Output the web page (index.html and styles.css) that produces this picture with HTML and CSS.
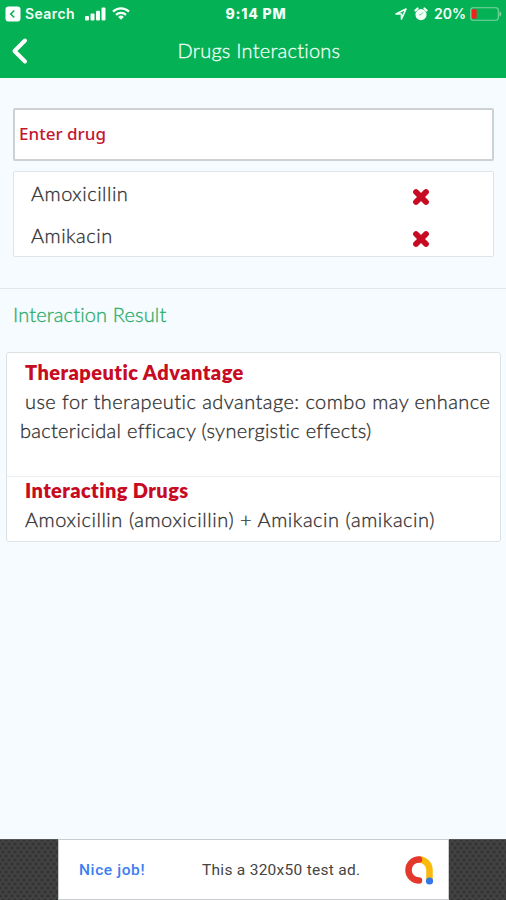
FILE: index.html
```html
<!DOCTYPE html>
<html lang="en">
<head>
<meta charset="utf-8">
<title>Drugs Interactions</title>
<link rel="stylesheet" href="styles.css">
</head>
<body>
<div class="screen">
  <header class="top">
    <div class="status">
      <div class="status-left">
        <svg class="back-app" viewBox="0 0 16 16"><rect x=".5" y=".5" width="15" height="15" rx="3" fill="#fff"/><path d="M9.300 4.500 5.700 8l3.600 3.500" fill="none" stroke="#05b155" stroke-width="1.600"/></svg>
        <span class="search">Search</span>
        <svg class="signal" viewBox="0 0 21 14" fill="#f4fff8"><rect x="0" y="9" width="4" height="4.500" rx="1"/><rect x="5.500" y="6.500" width="4" height="7" rx="1"/><rect x="11" y="3.800" width="4" height="9.700" rx="1"/><rect x="16.500" y="0.500" width="4" height="13" rx="1"/></svg>
        <svg class="wifi" viewBox="0 0 18 13" fill="none" stroke="#f4fff8" stroke-width="2.200"><path d="M1 4.600a11.500 11.500 0 0 1 16 0"/><path d="M4 7.900a7.200 7.200 0 0 1 10 0"/><path d="M6.200 9.900a4 4 0 0 1 5.600 0L9 12.800z" fill="#f4fff8" stroke="none"/></svg>
      </div>
      <div class="time"><span class="clock">9:14 PM</span></div>
      <div class="status-right">
        <svg class="arrow" viewBox="0 0 12 12"><path d="M1 6 11 1 6.500 11V6z" fill="none" stroke="#f4fff8" stroke-width="1.600" stroke-linejoin="round"/></svg>
        <svg class="alarm" viewBox="0 0 14 14"><circle cx="7" cy="7.600" r="5.600" fill="#f4fff8"/><path d="M1.400 3.600 3.600 1.400M12.600 3.600l-2.200-2.200" stroke="#f4fff8" stroke-width="2.100" stroke-linecap="round"/><path d="M9 5.400 7 7.700H5" fill="none" stroke="#5ccb8e" stroke-width=".9"/></svg>
        <span class="percent">20%</span>
        <svg class="battery" viewBox="0 0 32 14"><rect x=".7" y=".7" width="27.600" height="12.600" rx="2.500" fill="none" stroke="#7ed6a4" stroke-width="1.100"/><path d="M29.500 4.500c2.400.5 2.400 4.500 0 5z" fill="#7ed6a4"/><rect x="2" y="2.200" width="4.600" height="9.600" rx="1" fill="#f5201c"/></svg>
      </div>
    </div>
    <div class="nav">
      <svg class="back" viewBox="0 0 18 28"><path d="M15 3.500 4.500 14 15 24.500" fill="none" stroke="#fff" stroke-width="4" stroke-linecap="round" stroke-linejoin="round"/></svg>
      <h1><span class="title">Drugs Interactions</span></h1>
    </div>
  </header>
  <main>
    <section class="entry">
      <div class="field"><span class="enter">Enter drug</span></div>
      <ul class="drugs">
        <li><span class="amox">Amoxicillin</span><svg class="cross" viewBox="0 0 18 18"><path d="m4.500 4.500 9 9M13.500 4.500l-9 9" stroke="#c60b22" stroke-width="5.200" stroke-linecap="round"/></svg></li>
        <li><span class="amik">Amikacin</span><svg class="cross" viewBox="0 0 18 18"><path d="m4.500 4.500 9 9M13.500 4.500l-9 9" stroke="#c60b22" stroke-width="5.200" stroke-linecap="round"/></svg></li>
      </ul>
    </section>
    <h2><span class="result-title">Interaction Result</span></h2>
    <section class="card">
      <div class="advantage">
        <h3><span class="adv-title">Therapeutic Advantage</span></h3>
        <p class="copy"><span class="line-one">use for therapeutic advantage: combo may enhance</span><br><span class="line-two">bactericidal efficacy (synergistic effects)</span></p>
      </div>
      <div class="pair">
        <h3><span class="int-title">Interacting Drugs</span></h3>
        <p><span class="line-pair">Amoxicillin (amoxicillin) + Amikacin (amikacin)</span></p>
      </div>
    </section>
  </main>
  <footer>
    <div class="mesh"></div>
    <div class="ad">
      <span class="nice">Nice job!</span>
      <span class="test">This a 320x50 test ad.</span>
      <svg class="admob" viewBox="0 0 30 30" fill="none" stroke-width="6.500" stroke-linecap="round"><path d="M15.500 4.500A10.500 10.500 0 0 1 25.500 15v10" stroke="#fbb90c"/><path d="M15 4.500a10.500 10.500 0 1 0 0 21" stroke="#e5382c"/><circle cx="25.500" cy="26" r="3.600" fill="#3278e8"/></svg>
    </div>
    <div class="mesh"></div>
  </footer>
</div>
</body>
</html>
```
FILE: styles.css
```css
* { box-sizing: border-box; }
body { margin: 0; font-family: Lato, sans-serif; font-variant-ligatures: none; color: #303030; }
h1, h2, h3, p, ul { margin: 0; padding: 0; font-weight: 300; }
span { white-space: nowrap; }
svg { display: block; flex: none; }
.screen { width: 506px; height: 900px; display: flex; flex-direction: column; background: #f5fbfe; overflow: hidden; }
.top { height: 78px; background: #05b155; color: #f4fff8; }
.status { height: 27px; display: grid; grid-template-columns: 200px 112px 1fr; font: 700 14px/27px Inter, sans-serif; }
.status-left, .status-right { display: flex; align-items: center; }
.status-left { padding-left: 5px; font-weight: 600; }
.back-app { width: 16px; height: 16px; }
.search { margin-left: 4px; width: 50px; letter-spacing: .4px; }
.signal { width: 21px; height: 14px; margin-left: 10px; }
.wifi { width: 18px; height: 13px; margin-left: 6px; }
.time { text-align: center; }
.clock { font-weight: 800; letter-spacing: .8px; }
.status-right { justify-content: flex-end; padding-right: 4px; font-weight: 600; }
.arrow { width: 12px; height: 12px; margin-right: 7px; }
.alarm { width: 14px; height: 14px; margin-right: 6px; }
.percent { width: 32px; margin-right: 4px; }
.battery { width: 32px; height: 14px; }
.nav { height: 51px; display: grid; grid-template-columns: 40px 1fr 28px; align-items: start; }
.back { width: 18px; height: 28px; margin: 10px 0 0 10px; }
h1 { font-size: 20px; line-height: 47px; text-align: center; }
.title { letter-spacing: .25px; }
h1, h2, .drugs, .card p { -webkit-text-stroke: .3px currentColor; }
main { flex: 1; }
.entry { padding: 30px 12px 31px 13px; border-bottom: 1px solid #e2e8ea; height: 211px; }
.field { height: 53px; border: 2px solid #cdd1d2; border-radius: 2px; background: #fff; padding-left: 4px; line-height: 48px; font-size: 17px; color: #c51630; font-weight: 500; font-family: "Noto Sans", sans-serif; }
.drugs { list-style: none; margin-top: 10px; height: 86px; border: 1px solid #dfe5e7; border-radius: 2px; background: #fff; padding: 1px 62px 0 17px; font-size: 20px; font-weight: 300; }
.drugs li { height: 42px; display: flex; align-items: center; justify-content: space-between; line-height: 38px; padding-bottom: 3px; }
.amox, .amik { letter-spacing: .5px; }
.cross { width: 20px; height: 20px; margin-top: 8px; }
h2 { font-size: 20px; line-height: 24px; padding: 13px 0 0 13px; color: #2cac65; height: 63px; }
.result-title { letter-spacing: .15px; }
.card { margin: 0 5px 0 6px; border: 1px solid #dce2e4; border-radius: 3px; background: #fff; height: 190px; font-size: 20px; line-height: 29px; }
h3 { padding-left: 18px; font-size: 20px; font-weight: 800; color: #c60b22; }
.adv-title { letter-spacing: .45px; }
.int-title { letter-spacing: .4px; }
.advantage { height: 124px; padding-top: 5px; border-bottom: 1px solid #eceeef; }
.copy { padding-left: 13px; }
.line-one { margin-left: 5px; letter-spacing: .44px; }
.line-two { letter-spacing: .28px; }
.line-pair { letter-spacing: .55px; }
.pair { margin-top: -1px; }
.pair p { padding-left: 18px; }
footer { height: 61px; display: grid; grid-template-columns: 58px 391px 57px; }
.mesh { background-color: #434343; background-image: radial-gradient(circle, #343434 1.300px, transparent 2px), radial-gradient(circle, #343434 1.300px, transparent 2px); background-size: 6px 8px; background-position: 0 0, 3px 4px; border-top: 1px solid #555; }
.ad { background: #fff; border: 1px solid #c9cdce; display: flex; align-items: center; font: 400 15.500px/24px Roboto, sans-serif; padding: 1px 14px 0 20px; }
.nice { color: #3c7df0; width: 123px; letter-spacing: .6px; font-weight: 500; }
.test { color: #444; letter-spacing: .28px; }
.admob { width: 30px; height: 30px; margin-left: auto; }
```
